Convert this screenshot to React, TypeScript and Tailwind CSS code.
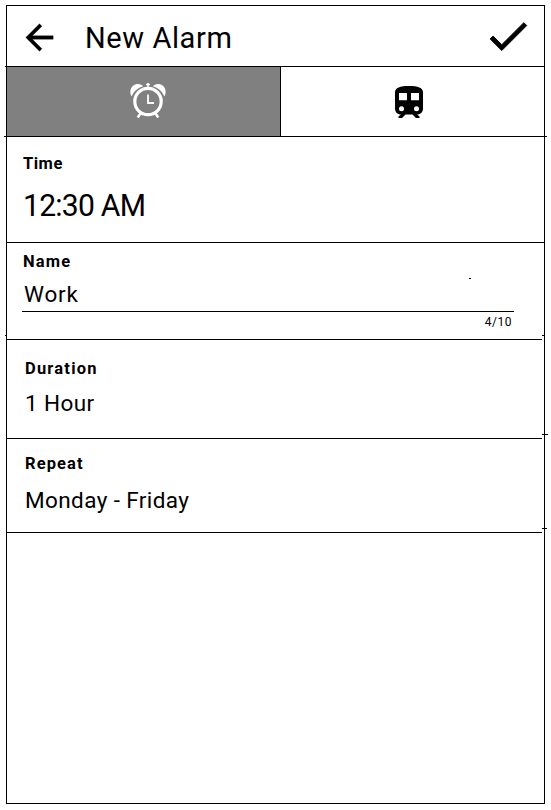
import React from "react";

function ArrowLeft() {
  return (
    <svg width="41" height="41" viewBox="0 0 24 24" className="block shrink-0">
      <path d="M20 11H7.83l5.59-5.59L12 4l-8 8 8 8 1.41-1.41L7.83 13H20v-2z" stroke="#000" strokeWidth=".2" />
    </svg>
  );
}

function Check() {
  return (
    <svg width="50" height="50" viewBox="0 0 24 24" className="block shrink-0">
      <path d="M9 16.17 4.83 12l-1.42 1.41L9 19 21 7l-1.41-1.41z" stroke="#000" strokeWidth=".45" />
    </svg>
  );
}

function AlarmClock() {
  return (
    <svg width="40" height="40" viewBox="0 0 40 40" fill="#fff" stroke="#fff" className="block">
      <circle cx="20" cy="21.5" r="13.2" fill="none" strokeWidth="3.2" />
      <path d="M3.600 16.500C.500 11 3.500 4.500 9 4c2.800-.300 5 .700 6.200 2.300C9.500 8 5.800 11.500 3.600 16.500z" stroke="none" />
      <path d="M36.400 16.500C39.500 11 36.500 4.500 31 4c-2.800-.300-5 .700-6.200 2.300C30.500 8 34.200 11.500 36.400 16.500z" stroke="none" />
      <path d="M20 3v6M18 4.500h4" fill="none" strokeWidth="1.500" />
      <path d="M20 14.500v8.500h6" fill="none" strokeWidth="1.800" />
      <path d="M12.500 33.500l-2.800 4M27.500 33.500l2.800 4" fill="none" strokeWidth="2.400" />
    </svg>
  );
}

function Train() {
  return (
    <svg width="40" height="40" viewBox="0 0 40 40" className="block">
      <path
        fillRule="evenodd"
        d="M20 6C11 6 6 7.500 6 12.500V28.500c0 3.800 2.500 6 6 6l-2.500 2V38h3.500l3.500-3.500h7L27 38h3.500v-1.500l-2.500-2c3.500 0 6-2.200 6-6V12.500C34 7.500 29 6 20 6zM10 13h8v7.200h-8zM22 13h8v7.200h-8zM12.500 26.200a2.500 2.500 0 1 0 0 5 2.500 2.500 0 0 0 0-5zM27.500 26.200a2.500 2.500 0 1 0 0 5 2.500 2.500 0 0 0 0-5z"
      />
    </svg>
  );
}

export default function App() {
  return (
    <div className="h-[810px] w-[551px] bg-white pl-[6px] pt-[5px] font-['Roboto','Liberation_Sans',sans-serif] text-black">
      <main className="relative flex h-[799px] w-[539px] flex-col border border-black">
        <header className="flex h-[61px] shrink-0 items-start border-b border-black">
          <button className="ml-[12px] mt-[11px]"><ArrowLeft /></button>
          <h1 className="ml-[25px] mt-[16px] whitespace-nowrap text-[29px] leading-[32px] tracking-[0.6px]">New Alarm</h1>
          <button className="ml-auto mr-[11px] mt-[5px]"><Check /></button>
        </header>

        <nav className="flex h-[70px] shrink-0 border-b border-black">
          <button className="flex w-[274px] items-start border-r border-black bg-[#808080] pl-[121px] pt-[13px]"><AlarmClock /></button>
          <button className="flex flex-1 items-start pl-[108px] pt-[13px]"><Train /></button>
        </nav>

        <section className="h-[106px] shrink-0 border-b border-black pl-[16px] pt-[17px]">
          <h2 className="text-[16.500px] font-bold leading-[20px] tracking-[0.5px]">Time</h2>
          <p className="mt-[15px] origin-left scale-x-[0.94] text-[32px] leading-[32px] tracking-[-0.8px]">12:30 AM</p>
        </section>

        <section className="mr-[2px] h-[97px] shrink-0 border-b border-black pl-[15px] pr-[28px] pt-[9px]">
          <h2 className="pl-px text-[16.500px] font-bold leading-[20px] tracking-[1.200px]">Name</h2>
          <div className="h-[40px] border-b border-black pl-[2px] pt-[10px]">
            <p className="text-[22.500px] leading-[24px] tracking-[0.8px]">Work</p>
          </div>
          <p className="pr-[2px] pt-[2px] text-right text-[12px] leading-[16px] tracking-[0.5px]">4/10</p>
        </section>

        <section className="mr-[2px] h-[99px] shrink-0 border-b border-black pl-[18px] pt-[19px]">
          <h2 className="text-[16.500px] font-bold leading-[20px] tracking-[1.200px]">Duration</h2>
          <p className="mt-[12px] text-[22.500px] leading-[24px] tracking-[0.4px]">1 Hour</p>
        </section>

        <section className="mr-[2px] h-[94px] shrink-0 border-b border-black pl-[18px] pt-[15px]">
          <h2 className="text-[16.500px] font-bold leading-[20px] tracking-[1.100px]">Repeat</h2>
          <p className="mt-[14px] text-[22.500px] leading-[24px] tracking-[0.4px]">Monday - Friday</p>
        </section>

        <i className="absolute -left-[2px] top-[60px] h-px w-[540px] bg-black" />
        <i className="absolute -left-[3px] top-[130px] h-px w-[543px] bg-black" />
        <i className="absolute -left-[2px] top-[329px] h-px w-px bg-black" />
        <i className="absolute left-[535px] top-[329px] h-px w-[2px] bg-black" />
        <i className="absolute left-[535px] top-[428px] h-px w-[6px] bg-black" />
        <i className="absolute left-[535px] top-[522px] h-px w-[5px] bg-black" />
        <i className="absolute left-[462px] top-[272px] h-px w-[2px] bg-black" />
      </main>
    </div>
  );
}
